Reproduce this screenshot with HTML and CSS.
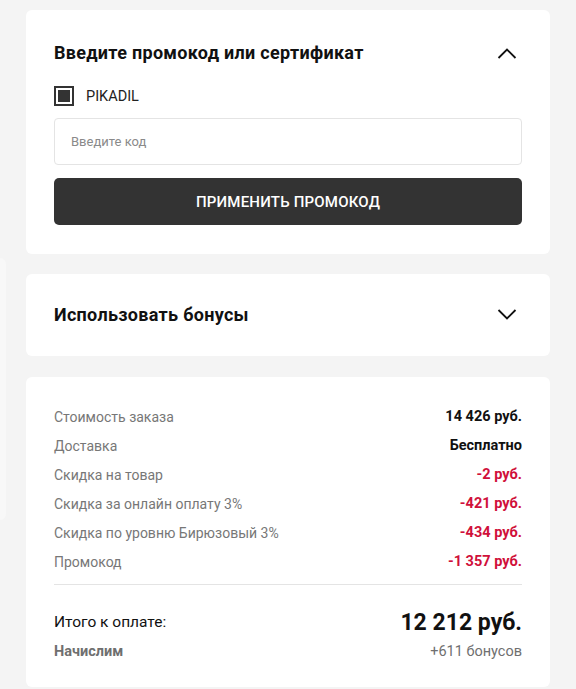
FILE: index.html
```html
<!DOCTYPE html>
<html lang="ru">
<head>
  <meta charset="UTF-8" />
  <meta name="viewport" content="width=device-width, initial-scale=1.0"/>
  <title>Оформление заказа</title>
  <link rel="stylesheet" href="styles.css">
</head>
<body>

  <div class="page">
    <div class="side">
      <div class="side-panel"></div>
    </div>

    <div class="checkout">

      <div class="card promo">
        <div class="card-head">
          <h3>Введите промокод или сертификат</h3>
          <svg class="chevron" width="20" height="12" viewBox="0 0 20 12">
            <path d="M1.5 11 L10 2.5 L18.5 11" fill="none" stroke="#111" stroke-width="1.8"/>
          </svg>
        </div>

        <label class="code-check">
          <span class="box"></span>
          PIKADIL
        </label>

        <input class="code-input" type="text" placeholder="Введите код">

        <button class="btn">Применить промокод</button>
      </div>

      <div class="card bonus">
        <div class="card-head">
          <h3>Использовать бонусы</h3>
          <svg class="chevron" width="20" height="12" viewBox="0 0 20 12">
            <path d="M1.5 1 L10 9.5 L18.5 1" fill="none" stroke="#111" stroke-width="1.8"/>
          </svg>
        </div>
      </div>

      <div class="card summary">
        <div class="rows">
          <div class="row"><span>Стоимость заказа</span><b>14 426 руб.</b></div>
          <div class="row"><span>Доставка</span><b>Бесплатно</b></div>
          <div class="row"><span>Скидка на товар</span><b class="minus">-2 руб.</b></div>
          <div class="row"><span>Скидка за онлайн оплату 3%</span><b class="minus">-421 руб.</b></div>
          <div class="row"><span>Скидка по уровню Бирюзовый 3%</span><b class="minus">-434 руб.</b></div>
          <div class="row"><span>Промокод</span><b class="minus">-1 357 руб.</b></div>
        </div>

        <div class="total">
          <span>Итого к оплате:</span>
          <b>12 212 руб.</b>
        </div>
        <div class="bonus-line">
          <b>Начислим</b>
          <span>+611 бонусов</span>
        </div>
      </div>

    </div>
  </div>

</body>
</html>
```

FILE: styles.css
```css
body {
  font-family: Roboto, "Noto Sans", sans-serif;
  background: #f4f4f4;
  margin: 0;
  color: #111;
}

.page {
  display: flex;
  gap: 20px;
}

.side {
  width: 6px;
  flex-shrink: 0;
  padding-top: 258px;
}

.side-panel {
  height: 262px;
  background: #f8f8f8;
  border-radius: 0 6px 6px 0;
}

.checkout {
  width: 524px;
  padding-top: 10px;
  display: flex;
  flex-direction: column;
  gap: 20px;
}

.card {
  background: #fff;
  border-radius: 6px;
  padding: 0 28px;
}

.card-head {
  display: flex;
  justify-content: space-between;
  align-items: center;
}

.card-head h3 {
  margin: 0;
  font-size: 18px;
  line-height: 20px;
  font-weight: 700;
  letter-spacing: 0.3px;
}

.chevron {
  margin-right: 5px;
}

/* promo code card */
.promo {
  padding-top: 33px;
  padding-bottom: 29px;
}

.code-check {
  display: flex;
  align-items: center;
  gap: 12px;
  margin-top: 23px;
  font-size: 14.5px;
  color: #222;
}

.code-check .box {
  width: 16px;
  height: 16px;
  border: 2px solid #333;
  background: #333;
  box-shadow: inset 0 0 0 2px #fff;
}

.code-input {
  display: block;
  box-sizing: border-box;
  width: 100%;
  height: 47px;
  margin-top: 12px;
  padding: 0 16px;
  border: 1px solid #e4e4e4;
  border-radius: 4px;
  font-family: inherit;
  font-size: 13px;
  color: #222;
}

.code-input::placeholder {
  color: #8a8a8a;
}

.btn {
  display: block;
  width: 100%;
  height: 47px;
  margin-top: 13px;
  background: #333;
  color: #fff;
  border: none;
  border-radius: 5px;
  font-family: inherit;
  font-size: 15px;
  font-weight: 500;
  letter-spacing: 0.2px;
  text-transform: uppercase;
  cursor: pointer;
}

/* bonus card */
.bonus {
  height: 82px;
  margin-bottom: 1px;
}

.bonus .card-head {
  height: 100%;
}

/* order summary */
.summary {
  padding-top: 25px;
  padding-bottom: 27px;
}

.rows {
  border-bottom: 1px solid #e4e4e4;
  padding-bottom: 8px;
}

.row {
  display: flex;
  justify-content: space-between;
  align-items: center;
  height: 29px;
  font-size: 14px;
}

.row span {
  color: #777;
}

.row b {
  font-size: 14.5px;
  font-weight: 700;
}

.row .minus {
  color: #d0103a;
}

.total {
  display: flex;
  justify-content: space-between;
  align-items: center;
  margin-top: 22px;
  height: 30px;
}

.total span {
  font-size: 15.5px;
}

.total b {
  font-size: 23px;
  font-weight: 700;
}

.bonus-line {
  display: flex;
  justify-content: space-between;
  align-items: center;
  margin-top: 6px;
  font-size: 14.5px;
  color: #6f6f6f;
}
```
